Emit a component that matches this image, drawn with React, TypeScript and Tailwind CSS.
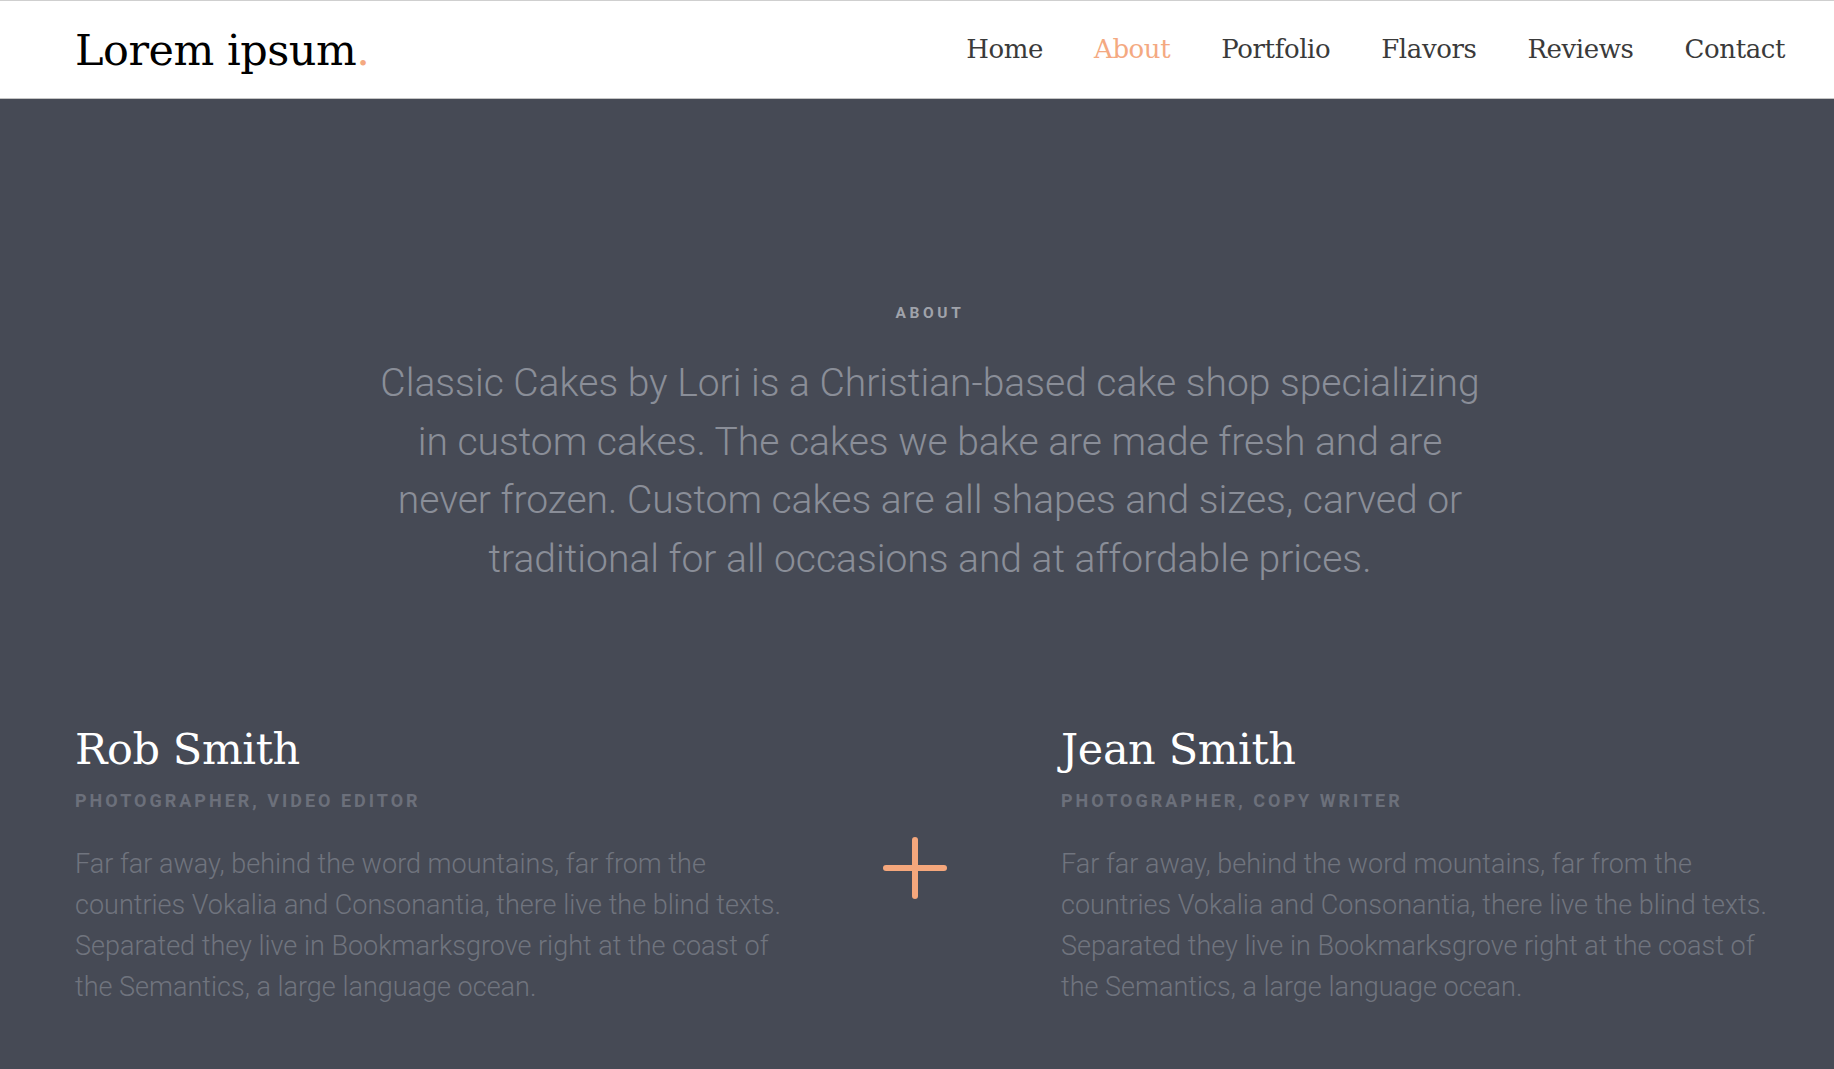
import React from "react";

const navItems = ["Home", "About", "Portfolio", "Flavors", "Reviews", "Contact"];

const blurb =
  "Far far away, behind the word mountains, far from the countries Vokalia and Consonantia, there live the blind texts. Separated they live in Bookmarksgrove right at the coast of the Semantics, a large language ocean.";

interface PersonProps {
  name: string;
  role: string;
}

const Person: React.FC<PersonProps> = ({ name, role }) => {
  return (
    <div className="flex flex-col">
      <h2 className="font-['DejaVu_Serif',serif] text-[43px] leading-[50px] text-white tracking-[-0.4px]">
        {name}
      </h2>
      <div className="mt-[17px] font-['Roboto',sans-serif] font-bold text-[18px] leading-[20px] tracking-[3px] text-[#6c707b] uppercase">
        {role}
      </div>
      <p className="mt-[33px] font-['Roboto',sans-serif] font-light text-[27px] leading-[41px] text-[#70747e]">
        {blurb}
      </p>
    </div>
  );
};

const PlusIcon = () => (
  <svg width="64" height="62" viewBox="0 0 64 62" fill="none">
    <line x1="32" y1="3" x2="32" y2="59" stroke="#f5a77c" strokeWidth="6" strokeLinecap="round" />
    <line x1="3" y1="31" x2="61" y2="31" stroke="#f5a77c" strokeWidth="6" strokeLinecap="round" />
  </svg>
);

export default function App() {
  return (
    <div className="min-h-screen bg-[#464a55] flex flex-col">
      {/* header */}
      <header className="bg-white border-t border-[#cfcfcf] border-b border-b-[#c4c4c4] h-[99px] flex items-start justify-between pl-[75px] pr-[49px]">
        <div className="mt-[28px] font-['DejaVu_Serif',serif] text-[43px] leading-none text-black tracking-[-0.5px]">
          Lorem ipsum<span className="text-[#f4a981]">.</span>
        </div>
        <nav className="mt-[35px] flex gap-[51px] font-['DejaVu_Serif',serif] text-[26px] leading-none tracking-[-0.4px]">
          {navItems.map((item) => (
            <a
              key={item}
              className={item === "About" ? "text-[#f4a981]" : "text-[#3a3a3a]"}
            >
              {item}
            </a>
          ))}
        </nav>
      </header>

      {/* about */}
      <section className="flex-1 pl-[75px] pr-[49px]">
        <div className="flex flex-col items-center pt-[204px]">
          <div className="font-['Roboto',sans-serif] font-bold text-[15.5px] leading-[20px] tracking-[3.6px] text-[#a0a3ab]">
            ABOUT
          </div>
          <p className="mt-[31px] w-[1110px] text-center font-['Roboto',sans-serif] font-light text-[39px] leading-[58.5px] text-[#8a8e98]">
            Classic Cakes by Lori is a Christian-based cake shop specializing in custom cakes. The cakes we bake
            are made fresh and are never frozen. Custom cakes are all shapes and sizes, carved or traditional for
            all occasions and at affordable prices.
          </p>
        </div>

        <div className="mt-[136px] grid grid-cols-[725px_261px_1fr] pb-[60px]">
          <Person name="Rob Smith" role="Photographer, Video Editor" />
          <div className="pl-[83px] pt-[113px]">
            <PlusIcon />
          </div>
          <Person name="Jean Smith" role="Photographer, Copy Writer" />
        </div>
      </section>
    </div>
  );
}
